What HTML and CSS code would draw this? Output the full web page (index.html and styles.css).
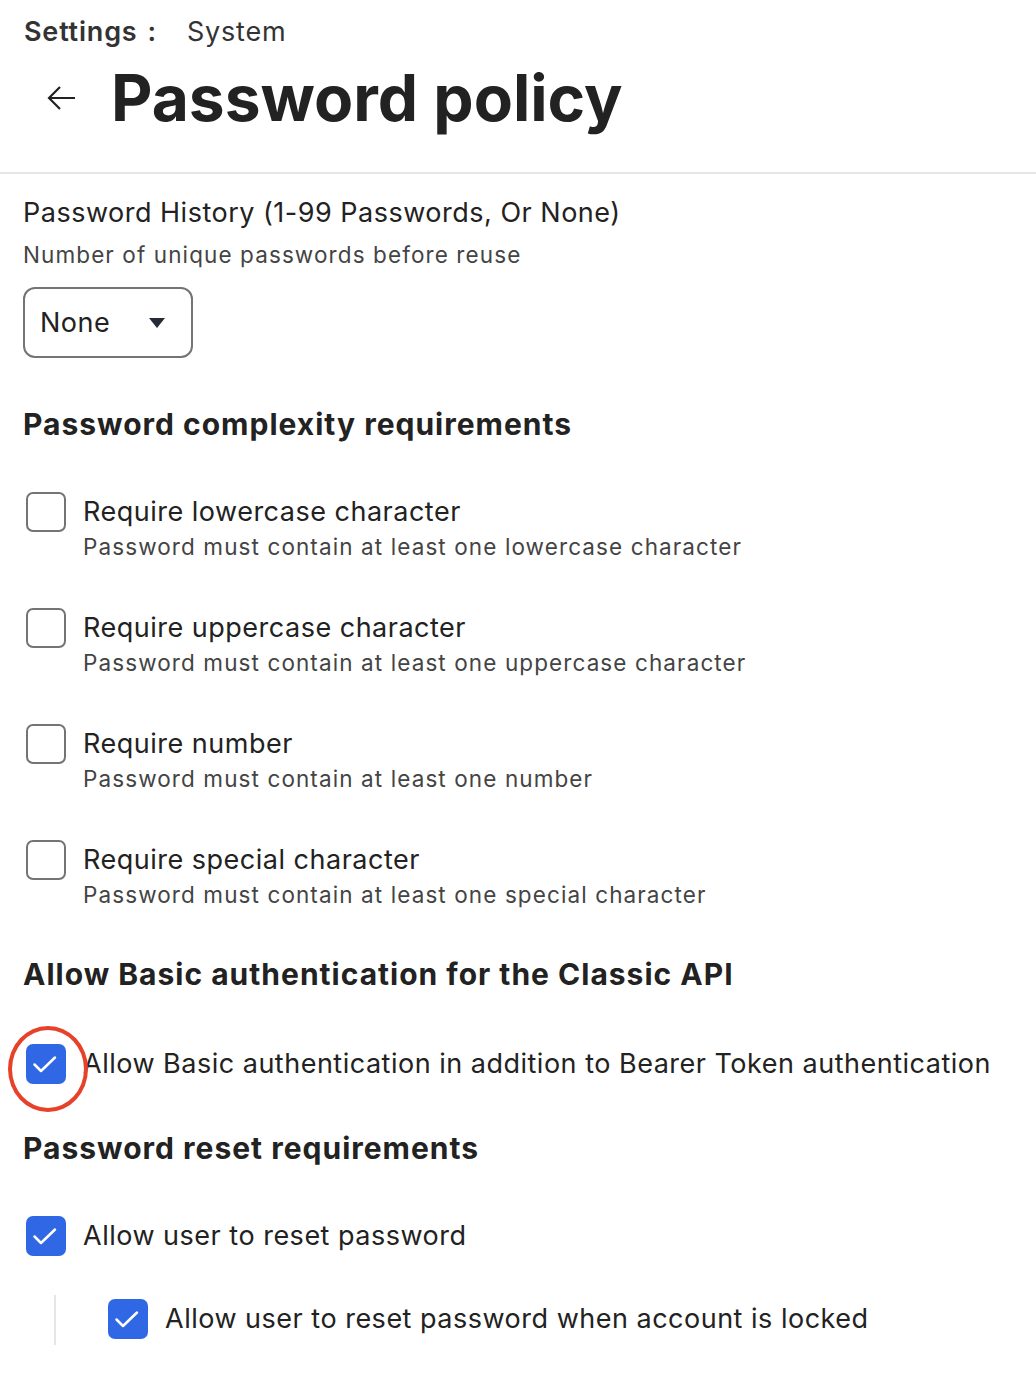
FILE: index.html
```html
<!DOCTYPE html>
<html>
<head>
<meta charset="utf-8">
<link rel="stylesheet" href="styles.css">
</head>
<body>
<header class="header">
  <div class="crumbs"><span class="crumb-root">Settings</span><span class="crumb-sep">:</span><span class="crumb-leaf">System</span></div>
  <div class="title-row">
    <svg class="back" width="30" height="26" viewBox="0 0 30 26"><path d="M28 13H3M13 2L2 13l11 11" fill="none" stroke="#222" stroke-width="2.2"/></svg>
    <h1 class="title">Password policy</h1>
  </div>
</header>
<main class="content">
  <section class="field">
    <div class="field-label">Password History (1-99 Passwords, Or None)</div>
    <div class="field-help">Number of unique passwords before reuse</div>
    <div class="select"><span>None</span><svg width="16" height="10" viewBox="0 0 16 10"><path d="M0 0h16L8 10z" fill="#262b38"/></svg></div>
  </section>

  <h2 class="section-title first">Password complexity requirements</h2>
  <div class="options">
    <div class="option"><span class="box"></span><div class="opt-text"><div class="opt-label">Require lowercase character</div><div class="opt-help">Password must contain at least one lowercase character</div></div></div>
    <div class="option"><span class="box"></span><div class="opt-text"><div class="opt-label">Require uppercase character</div><div class="opt-help">Password must contain at least one uppercase character</div></div></div>
    <div class="option"><span class="box"></span><div class="opt-text"><div class="opt-label">Require number</div><div class="opt-help">Password must contain at least one number</div></div></div>
    <div class="option"><span class="box"></span><div class="opt-text"><div class="opt-label">Require special character</div><div class="opt-help">Password must contain at least one special character</div></div></div>
  </div>

  <h2 class="section-title second">Allow Basic authentication for the Classic API</h2>
  <div class="option single basic">
    <span class="box checked highlight"><svg width="40" height="40" viewBox="0 0 40 40"><path d="M8.5 20.5L15 27L29 13.5" fill="none" stroke="#fff" stroke-width="2.5" stroke-linecap="round" stroke-linejoin="round"/></svg></span>
    <div class="opt-label">Allow Basic authentication in addition to Bearer Token authentication</div>
  </div>

  <h2 class="section-title third">Password reset requirements</h2>
  <div class="option single reset">
    <span class="box checked"><svg width="40" height="40" viewBox="0 0 40 40"><path d="M8.5 20.5L15 27L29 13.5" fill="none" stroke="#fff" stroke-width="2.5" stroke-linecap="round" stroke-linejoin="round"/></svg></span>
    <div class="opt-label">Allow user to reset password</div>
  </div>
  <div class="nested">
    <div class="option single">
      <span class="box checked"><svg width="40" height="40" viewBox="0 0 40 40"><path d="M8.5 20.5L15 27L29 13.5" fill="none" stroke="#fff" stroke-width="2.5" stroke-linecap="round" stroke-linejoin="round"/></svg></span>
      <div class="opt-label">Allow user to reset password when account is locked</div>
    </div>
  </div>
</main>
</body>
</html>
```

FILE: styles.css
```css
* { box-sizing: border-box; }
html, body { margin: 0; padding: 0; background: #fff; }
body { font-family: Inter, "Noto Sans", sans-serif; color: #222; }

.header { border-bottom: 2px solid #e6e6e6; padding: 14px 0 36px 0; }
.crumbs { display: flex; align-items: baseline; padding-left: 24px; font-size: 27px; color: #333; line-height: 36px; letter-spacing: 0.8px; }
.crumb-root { font-weight: 600; }
.crumb-sep { font-weight: 600; margin: 0 30px 0 10px; }
.crumb-leaf { font-weight: 400; }
.title-row { display: flex; align-items: center; padding-left: 47px; margin-top: 10px; }
.back { margin-right: 34px; }
.title { margin: 0; font-size: 64px; font-weight: 700; line-height: 76px; color: #222; letter-spacing: 0; }

.content { padding: 20px 0 40px 23px; }
.field-label { font-size: 27px; line-height: 38px; color: #222; letter-spacing: 0.5px; }
.field-help { font-size: 22.5px; line-height: 30px; color: #444; margin-top: 8px; letter-spacing: 1.1px; }
.select { width: 170px; height: 71px; margin-top: 17px; border: 2px solid #747474; border-radius: 12px; display: flex; align-items: center; justify-content: space-between; padding: 0 26px 0 15px; font-size: 27px; color: #222; letter-spacing: 0.5px; }

.section-title { margin: 46px 0 0 0; font-size: 30px; font-weight: 700; line-height: 40px; color: #222; letter-spacing: 1px; }
.section-title.first { margin-top: 46px; }
.section-title.second { margin-top: 44px; }
.section-title.third { margin-top: 44px; }

.options { margin-top: 48px; display: flex; flex-direction: column; gap: 46px; }
.option { display: flex; align-items: flex-start; gap: 17px; padding-left: 3px; }
.box { flex: none; width: 40px; height: 40px; border: 2px solid #747474; border-radius: 7px; display: flex; align-items: center; justify-content: center; position: relative; }
.box svg { flex: none; margin: -2px; }
.box.checked { background: #3067e4; border-color: #3067e4; }
.box.highlight::after { content: ""; position: absolute; left: -20px; top: -20px; width: 72px; height: 78px; border: 4px solid #e8412a; border-radius: 50%; }
.opt-text { padding-top: 1px; }
.opt-label { font-size: 27px; line-height: 38px; color: #222; letter-spacing: 0.5px; }
.opt-help { font-size: 22.5px; line-height: 30px; color: #444; letter-spacing: 1.1px; margin-top: 1px; }
.single { align-items: center; }
.basic { margin-top: 50px; }
.reset { margin-top: 48px; }
.nested { margin: 39px 0 0 31px; border-left: 2px solid #e6e6e6; padding: 4px 0 6px 52px; }
.nested .option { padding-left: 0; }
```
